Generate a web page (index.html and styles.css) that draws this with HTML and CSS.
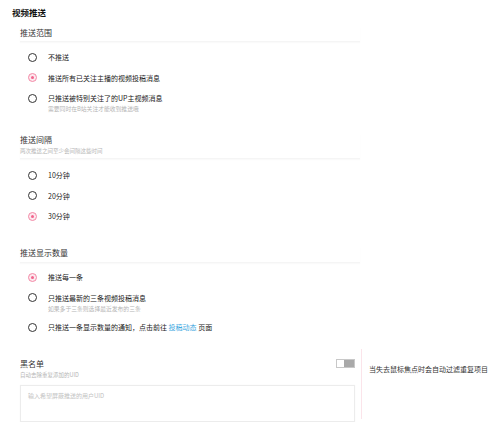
FILE: index.html
```html
<!DOCTYPE html>
<html>

<head>
  <title>视频推送</title>
  <meta charset="utf-8">
  <link rel="stylesheet" href="styles.css">
</head>

<body>
  <div class="page">
    <div class="title">视频推送</div>

    <div class="section first">
      <div class="section-head">
        <div class="head-text">推送范围</div>
      </div>
      <div class="options">
        <div class="option">
          <span class="radio"></span>
          <div class="label">不推送</div>
        </div>
        <div class="option">
          <span class="radio checked"></span>
          <div class="label">推送所有已关注主播的视频投稿消息</div>
        </div>
        <div class="option">
          <span class="radio"></span>
          <div class="label">只推送被特别关注了的UP主视频消息
            <div class="sub">需要同时在B站关注才能收到推送哦</div>
          </div>
        </div>
      </div>
    </div>

    <div class="section interval">
      <div class="section-head">
        <div class="head-text">推送间隔</div>
        <div class="head-sub">两次推送之间至少会间隔这些时间</div>
      </div>
      <div class="options">
        <div class="option">
          <span class="radio"></span>
          <div class="label">10分钟</div>
        </div>
        <div class="option">
          <span class="radio"></span>
          <div class="label">20分钟</div>
        </div>
        <div class="option">
          <span class="radio checked"></span>
          <div class="label">30分钟</div>
        </div>
      </div>
    </div>

    <div class="section amount">
      <div class="section-head">
        <div class="head-text">推送显示数量</div>
      </div>
      <div class="options">
        <div class="option">
          <span class="radio checked"></span>
          <div class="label">推送每一条</div>
        </div>
        <div class="option">
          <span class="radio"></span>
          <div class="label">只推送最新的三条视频投稿消息
            <div class="sub">如果多于三条则选择最近发布的三条</div>
          </div>
        </div>
        <div class="option">
          <span class="radio"></span>
          <div class="label">只推送一条显示数量的通知，点击前往 <a class="link">投稿动态</a> 页面</div>
        </div>
      </div>
    </div>

    <div class="blacklist">
      <div class="bl-main">
        <div class="bl-head">
          <div>
            <div class="head-text">黑名单</div>
            <div class="head-sub">自动去除重复添加的UID</div>
          </div>
          <span class="toggle"><span class="knob"></span></span>
        </div>
        <div class="textarea">输入希望屏蔽推送的用户UID</div>
      </div>
      <div class="bl-side">当失去鼠标焦点时会自动过滤重复项目</div>
    </div>
  </div>
</body>
</html>
```

FILE: styles.css
```css
/* global */
* {
  box-sizing: border-box;
}

body,
html {
  margin: 0;
  padding: 0;
  background: #fff;
  color: #222;
  font-family: "Noto Sans CJK SC", "Noto Sans", sans-serif;
}

.page {
  padding: 6px 0 0 12px;
}

.title {
  font-size: 8.5px;
  line-height: 12px;
  font-weight: bold;
  color: #111;
}

/* sections */
.section {
  width: 340px;
  margin-left: 8px;
  margin-top: 21px;
}

.section.first {
  margin-top: 9px;
}

.section.amount {
  margin-top: 26px;
}

.section-head {
  border-bottom: 1px solid #f5f5f5;
  box-shadow: 0 1px 1px #fafafa;
  padding-bottom: 3px;
}

.section.first .section-head {
  padding-bottom: 2px;
}

.head-text {
  font-size: 8px;
  line-height: 12px;
  color: #333;
}

.head-sub {
  margin-top: 1px;
  font-size: 5.5px;
  line-height: 8px;
  color: #b5b5b5;
}

/* radio options */
.options {
  padding: 10px 0 0 8px;
}

.section.interval .options {
  padding-top: 11px;
}

.option {
  display: flex;
  align-items: flex-start;
  margin-bottom: 10.5px;
}

.option:last-child {
  margin-bottom: 0;
}

.radio {
  flex: none;
  width: 9px;
  height: 9px;
  margin-top: 0.5px;
  border: 1.3px solid #333;
  border-radius: 50%;
  display: flex;
  align-items: center;
  justify-content: center;
}

.radio.checked {
  border: 1px solid #f38aa7;
  background: #fde9ef;
}

.radio.checked::after {
  content: "";
  width: 3px;
  height: 3px;
  border-radius: 50%;
  background: #f2648c;
}

.label {
  margin-left: 11px;
  font-size: 7px;
  line-height: 10px;
  color: #222;
}

.sub {
  margin-top: 2px;
  font-size: 5.8px;
  line-height: 8px;
  color: #b5b5b5;
}

.link {
  color: #3aa6e0;
}

.section.amount .options {
  padding-top: 9px;
}

.section.amount .option:last-child {
  margin-top: -1px;
}

/* blacklist */
.blacklist {
  display: flex;
  margin-left: 8px;
  margin-top: 17px;
}

.bl-main {
  width: 335px;
  padding-top: 9px;
}

.bl-head {
  display: flex;
  justify-content: space-between;
  align-items: flex-start;
}

.toggle {
  margin-top: 1px;
  width: 19px;
  height: 9px;
  border: 1px solid #c8c8c8;
  background: #fff;
  display: flex;
  justify-content: flex-end;
}

.knob {
  width: 10px;
  height: 100%;
  background: #a9a9a9;
}

.textarea {
  margin-top: 6px;
  height: 37px;
  border: 1px solid #ececec;
  box-shadow: 0 0 1px #f4f4f4;
  padding: 5px 7px;
  font-size: 6px;
  line-height: 9px;
  color: #c2c2c2;
}

.bl-side {
  margin-left: 6px;
  border-left: 1px solid #fbe4ea;
  padding: 15px 0 0 7px;
  height: 70px;
  font-size: 7px;
  line-height: 10px;
  color: #333;
}
```
